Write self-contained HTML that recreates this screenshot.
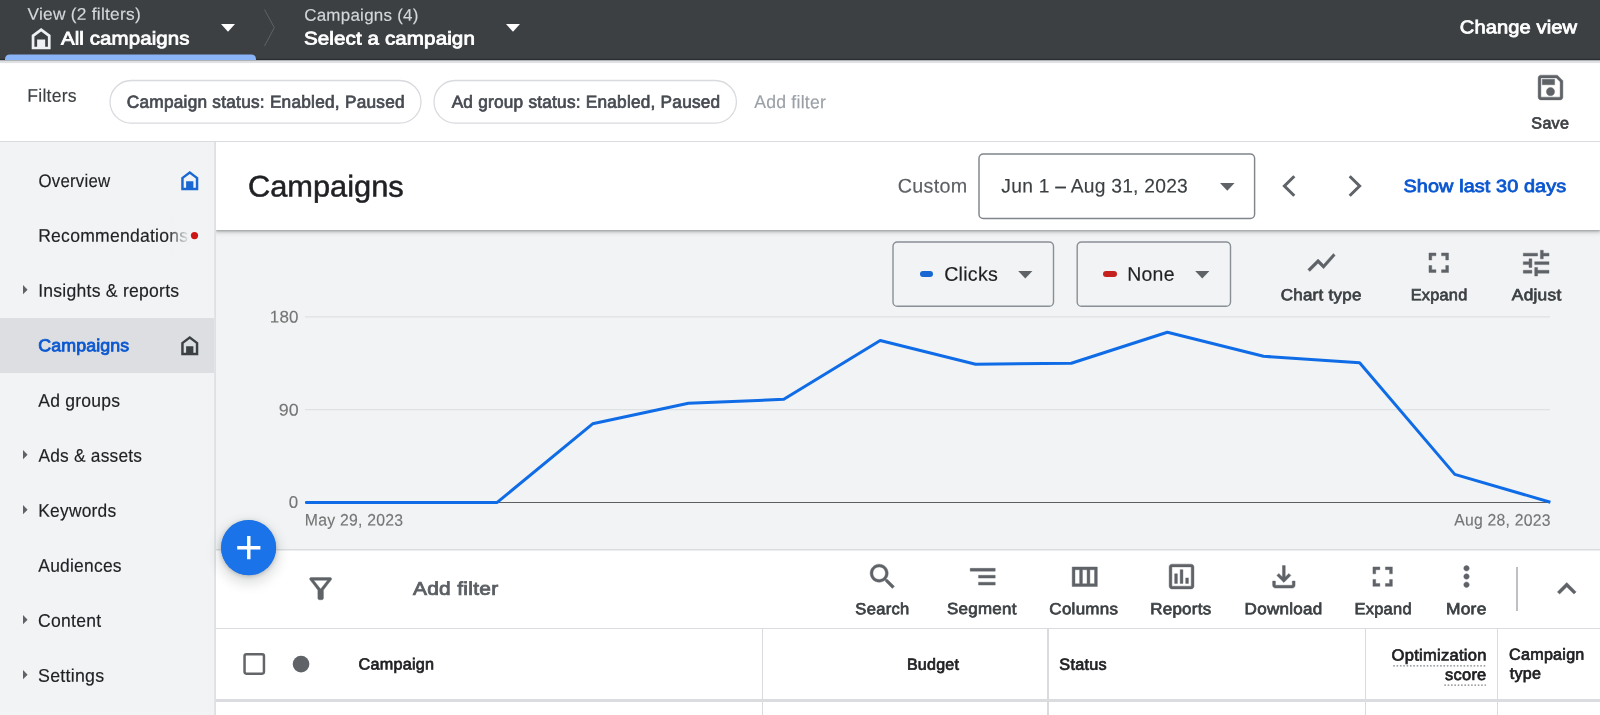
<!DOCTYPE html>
<html lang="en">
<head>
<meta charset="utf-8">
<title>Campaigns</title>
<style>
html,body{margin:0;padding:0;}
body{width:1600px;height:715px;overflow:hidden;position:relative;background:#f1f3f4;font-family:"Liberation Sans",Arial,sans-serif;}
.abs{position:absolute;}
.t{position:absolute;left:0;top:0;white-space:pre;display:block;text-rendering:geometricPrecision;transform-origin:0 0;}
#texts{position:absolute;left:0;top:0;width:1600px;height:715px;will-change:transform;}
svg{position:absolute;display:block;overflow:visible;}
svg.i path{stroke:#5f6368;stroke-width:.3px;stroke-linejoin:miter;}
#topbar{left:0;top:0;width:1600px;height:60px;background:#3c4043;}
#filterbar{left:0;top:60px;width:1600px;height:81px;background:#fff;border-bottom:1px solid #dadce0;}
#sidebar{left:0;top:142px;width:216px;height:573px;background:#f1f3f4;}
#navsel{left:0;top:318.3px;width:214px;height:54.5px;background:#dcdee1;}
#header{left:216px;top:142px;width:1384px;height:88px;background:#fff;box-shadow:0 1.4px 2.5px rgba(60,64,67,.42),0 1.4px 4px 1.4px rgba(60,64,67,.17);}
#toolbar{left:216px;top:550px;width:1384px;height:78px;background:#fff;border-top:1px solid #eceef1;box-sizing:border-box;}
#thead{left:216px;top:628px;width:1384px;height:71px;background:#fff;border-top:1px solid #dadce0;border-bottom:2.5px solid #dadce0;box-sizing:content-box;}
#tbody{left:216px;top:702px;width:1384px;height:13px;background:#fff;}
.vsep{top:629px;width:1.5px;height:86px;background:#d9dbdf;}
</style>
</head>
<body>
<!-- top bar -->
<div id="topbar" class="abs"></div>
<!-- chart area -->
<svg style="left:216px;top:231px" width="1384" height="319" viewBox="216 231 1384 319">
  <line x1="305" x2="1550" y1="316.9" y2="316.9" stroke="#e0e1e3" stroke-width="1.3"/>
  <line x1="305" x2="1550" y1="409.6" y2="409.6" stroke="#e0e1e3" stroke-width="1.3"/>
  <line x1="305" x2="1550" y1="502.5" y2="502.5" stroke="#5c5e60" stroke-width="1.1"/>
  <polyline fill="none" stroke="#0f6ce6" stroke-width="3" stroke-linejoin="round" stroke-linecap="butt"
   points="305.3,502.4 401,502.4 497.2,502.4 592.6,423.8 688.4,403.3 783.8,399.3 880.2,340.5 975.6,364.2 1071.3,363.3 1167.4,332.3 1263.5,356.3 1359.6,362.8 1454.8,474.4 1550.4,502.2"/>
</svg>
<div class="abs" style="left:216px;top:549px;width:1384px;height:1px;background:#dadce0;"></div>
<div id="header" class="abs"></div>
<svg style="left:264px;top:9px" width="11" height="38" viewBox="0 0 11 38"><path d="M0.5 0.5 L10.3 18.6 L0.5 37" fill="none" stroke="#5f6368" stroke-width="1"/></svg>
<svg style="left:221px;top:23.8px" width="14" height="7.7" viewBox="0 0 14 7.7"><path d="M0 0h14L7 7.7z" fill="#fff"/></svg>
<svg style="left:506px;top:23.8px" width="14" height="7.7" viewBox="0 0 14 7.7"><path d="M0 0h14L7 7.7z" fill="#fff"/></svg>
<!-- home icon white -->
<svg style="left:30.6px;top:27.5px" width="20.3" height="21.3" viewBox="4 3 16 18"><path fill="#eef0f2" fill-rule="evenodd" d="M12 3L4 9v12h16V9zM6.3 18.8v-8.65L12 5.9l5.7 4.25v8.65h-2.3v-6.1H8.6v6.1z"/></svg>

<!-- filter bar -->
<div id="filterbar" class="abs"></div>
<div class="abs" style="left:0;top:58px;width:1600px;height:6px;background:linear-gradient(180deg,#3c4043 0,#3c4043 .4px,#2a2e31 .9px,#2a2e31 1.9px,#dcdee2 2.7px,#dddfe3 4.4px,#fff 5.6px);"></div>
<svg style="left:0;top:50px" width="270" height="12" viewBox="0 50 270 12"><path d="M5 60V59.4Q5 54.4 10 54.4H251Q256 54.4 256 59.4V60Z" fill="#8ab4f8"/></svg>
<svg style="left:0;top:60px" width="1600" height="82" viewBox="0 60 1600 82"><rect x="110" y="80.5" width="311" height="42.6" rx="21.3" fill="#fff" stroke="#d8dade" stroke-width="1.3"/><rect x="434" y="80.5" width="302.4" height="42.6" rx="21.3" fill="#fff" stroke="#d8dade" stroke-width="1.3"/></svg>
<svg style="left:1534px;top:71px" width="33" height="33" viewBox="0 0 24 24" class="i"><path fill="#5f6368" d="M17 3H5c-1.11 0-2 .9-2 2v14c0 1.1.89 2 2 2h14c1.1 0 2-.9 2-2V7l-4-4zm2 16H5V5h11.17L19 7.83V19zm-7-7c-1.66 0-3 1.34-3 3s1.34 3 3 3 3-1.34 3-3-1.34-3-3-3zM6 6h9v4H6z"/></svg>

<!-- sidebar -->
<div id="sidebar" class="abs"></div>
<div id="navsel" class="abs"></div>
<svg style="left:212px;top:142px" width="6" height="573" viewBox="212 142 6 573"><rect x="214.2" y="142" width="1.8" height="573" fill="#dee0e4"/></svg>
<svg style="left:180.8px;top:171.2px" width="17.5" height="19.2" viewBox="4 3 16 18"><path fill="#1967d2" fill-rule="evenodd" d="M12 3L4 9v12h16V9zM6.3 18.8v-8.65L12 5.9l5.7 4.25v8.65h-2.3v-6.1H8.6v6.1z"/></svg>
<svg style="left:180.8px;top:336.2px" width="17.5" height="19.2" viewBox="4 3 16 18"><path fill="#3c4043" fill-rule="evenodd" d="M12 3L4 9v12h16V9zM6.3 18.8v-8.65L12 5.9l5.7 4.25v8.65h-2.3v-6.1H8.6v6.1z"/></svg>
<svg style="left:188px;top:229px" width="14" height="14" viewBox="188 229 14 14"><circle cx="194.5" cy="235.6" r="3.6" fill="#cc1616"/></svg>
<svg style="left:23.3px;top:284.8px" width="4.6" height="9.4" viewBox="0 0 5 10"><path d="M0 0l5 5-5 5z" fill="#5f6368"/></svg>
<svg style="left:23.3px;top:449.8px" width="4.6" height="9.4" viewBox="0 0 5 10"><path d="M0 0l5 5-5 5z" fill="#5f6368"/></svg>
<svg style="left:23.3px;top:504.8px" width="4.6" height="9.4" viewBox="0 0 5 10"><path d="M0 0l5 5-5 5z" fill="#5f6368"/></svg>
<svg style="left:23.3px;top:614.8px" width="4.6" height="9.4" viewBox="0 0 5 10"><path d="M0 0l5 5-5 5z" fill="#5f6368"/></svg>
<svg style="left:23.3px;top:669.8px" width="4.6" height="9.4" viewBox="0 0 5 10"><path d="M0 0l5 5-5 5z" fill="#5f6368"/></svg>


<!-- header -->
<svg style="left:970px;top:148px" width="300" height="80" viewBox="970 148 300 80"><rect x="979" y="154.05" width="275.6" height="64.45" rx="4.3" fill="#fff" stroke="#7f858b" stroke-width="1.45"/></svg>
<svg style="left:1219.6px;top:183.3px" width="14.6" height="7.8" viewBox="0 0 14 7.5"><path d="M0 0h14L7 7.5z" fill="#5f6368"/></svg>
<svg style="left:1281.5px;top:175px" width="14" height="22" viewBox="0 0 14 22"><path d="M12.3 1.2L2.4 11l9.9 9.8" fill="none" stroke="#5f6368" stroke-width="3"/></svg>
<svg style="left:1348px;top:175px" width="14" height="22" viewBox="0 0 14 22"><path d="M1.7 1.2L11.6 11l-9.9 9.8" fill="none" stroke="#5f6368" stroke-width="3"/></svg>

<!-- metric boxes -->
<svg style="left:880px;top:236px" width="360" height="76" viewBox="880 236 360 76"><rect x="893" y="242" width="160.5" height="64.2" rx="4.3" fill="none" stroke="#8a8f95" stroke-width="1.4"/><rect x="1077.2" y="242" width="153.3" height="64.2" rx="4.3" fill="none" stroke="#8a8f95" stroke-width="1.4"/></svg>
<div class="abs" style="left:919.5px;top:271.2px;width:13.8px;height:6.1px;border-radius:3px;background:#1967d2;"></div>
<div class="abs" style="left:1103.1px;top:271.4px;width:14px;height:6px;border-radius:3px;background:#c5221f;"></div>
<svg style="left:1018px;top:271.2px" width="14.6" height="7.6" viewBox="0 0 14 7.5"><path d="M0 0h14L7 7.5z" fill="#5f6368"/></svg>
<svg style="left:1194.6px;top:271.2px" width="14.6" height="7.6" viewBox="0 0 14 7.5"><path d="M0 0h14L7 7.5z" fill="#5f6368"/></svg>
<!-- chart type / expand / adjust icons -->
<svg style="left:1304.5px;top:246px" width="33" height="33" viewBox="0 0 24 24" class="i"><path fill="#5f6368" d="M3.5 18.49l6-6.01 4 4L22 6.92l-1.41-1.41-7.09 7.97-4-4L2 16.99z"/></svg>
<svg style="left:1422px;top:246px" width="33.5" height="33.5" viewBox="0 0 24 24" class="i"><path fill="#5f6368" d="M7 14H5v5h5v-2H7v-3zm-2-4h2V7h3V5H5v5zm12 7h-3v2h5v-5h-2v3zM14 5v2h3v3h2V5h-5z"/></svg>
<svg style="left:1518.7px;top:245.7px" width="34.3" height="34.3" viewBox="0 0 24 24" class="i"><path fill="#5f6368" d="M3 17v2h6v-2H3zM3 5v2h10V5H3zm10 16v-2h8v-2h-8v-2h-2v6h2zM7 9v2H3v2h4v2h2V9H7zm14 4v-2H11v2h10zm-6-4h2V7h4V5h-4V3h-2v6z"/></svg>

<!-- toolbar -->
<div id="toolbar" class="abs"></div>
<div id="thead" class="abs"></div>
<div id="tbody" class="abs"></div>
<div class="abs vsep" style="left:761.5px;"></div>
<div class="abs vsep" style="left:1047px;"></div>
<div class="abs vsep" style="left:1364.5px;"></div>
<div class="abs vsep" style="left:1496.5px;"></div>
<div class="abs" style="left:216px;top:698.7px;width:1384px;height:2.6px;background:#dadce0;"></div>
<!-- FAB -->
<div class="abs" style="left:221px;top:520px;width:55px;height:55px;border-radius:50%;background:#1a73e8;box-shadow:0 1.4px 4.1px rgba(60,64,67,.3),0 5.5px 11px 4.1px rgba(60,64,67,.15);"></div>
<svg style="left:216px;top:515px" width="66" height="66" viewBox="216 515 66 66"><circle cx="248.7" cy="547.8" r="27.45" fill="#1a73e8"/><path d="M237.2 547.7h23.2M248.8 536.1v23.2" stroke="#fff" stroke-width="3.4" fill="none"/></svg>
<!-- filter icon -->
<svg style="left:303.75px;top:571.75px" width="33.3" height="33.3" viewBox="0 0 24 24" class="i"><path fill="#5f6368" d="M7 6h10l-5.01 6.3L7 6zm-2.75-.39C6.27 8.2 10 13 10 13v6c0 .55.45 1 1 1h2c.55 0 1-.45 1-1v-6s3.72-4.8 5.74-7.39c.51-.66.04-1.61-.79-1.61H5.04c-.83 0-1.3.95-.79 1.61z"/></svg>
<!-- toolbar icons -->
<svg style="left:865.8px;top:560px" width="33.3" height="33.3" viewBox="0 0 24 24" class="i"><path fill="#5f6368" d="M15.5 14h-.79l-.28-.27C15.41 12.59 16 11.11 16 9.5 16 5.91 13.09 3 9.5 3S3 5.91 3 9.5 5.91 16 9.5 16c1.61 0 3.09-.59 4.23-1.57l.27.28v.79l5 4.99L20.49 19l-4.99-5zm-6 0C7.01 14 5 11.99 5 9.5S7.01 5 9.5 5 14 7.01 14 9.5 11.99 14 9.5 14z"/></svg>
<svg style="left:965.8px;top:559.8px" width="33.4" height="33.4" viewBox="0 0 24 24" class="i"><path fill="#5f6368" d="M9 18h12v-2H9v2zM3 6v2h18V6H3zm6 7h12v-2H9v2z"/></svg>
<svg style="left:1067.5px;top:559.8px" width="33.5" height="33.5" viewBox="0 0 24 24" class="i"><path fill="#5f6368" d="M3 5v14h18V5H3zm5.33 12H5V7h3.33v10zm5.34 0h-3.33V7h3.33v10zM19 17h-3.33V7H19v10z"/></svg>
<svg style="left:1165px;top:559.8px" width="33.1" height="33.1" viewBox="0 0 24 24" class="i"><path fill="#5f6368" d="M9 17H7v-7h2v7zm4 0h-2V7h2v10zm4 0h-2v-4h2v4zm2 2H5V5h14v14zm0-16H5c-1.1 0-2 .9-2 2v14c0 1.1.9 2 2 2h14c1.1 0 2-.9 2-2V5c0-1.1-.9-2-2-2z"/></svg>
<svg style="left:1267px;top:559.6px" width="33.7" height="33.7" viewBox="0 0 24 24" class="i"><path fill="#5f6368" d="M18 15v3H6v-3H4v3c0 1.100.9 2 2 2h12c1.100 0 2-.9 2-2v-3h-2zm-1-4l-1.410-1.410L13 12.170V4h-2v8.170L8.410 9.590 7 11l5 5 5-5z"/></svg>
<svg style="left:1366px;top:560px" width="33.3" height="33.3" viewBox="0 0 24 24" class="i"><path fill="#5f6368" d="M7 14H5v5h5v-2H7v-3zm-2-4h2V7h3V5H5v5zm12 7h-3v2h5v-5h-2v3zM14 5v2h3v3h2V5h-5z"/></svg>
<svg style="left:1449.8px;top:560px" width="33" height="33" viewBox="0 0 24 24" class="i"><path fill="#5f6368" d="M12 8c1.100 0 2-.9 2-2s-.9-2-2-2-2 .9-2 2 .9 2 2 2zm0 2c-1.100 0-2 .9-2 2s.9 2 2 2 2-.9 2-2-.9-2-2-2zm0 6c-1.100 0-2 .9-2 2s.9 2 2 2 2-.9 2-2-.9-2-2-2z"/></svg>
<div class="abs" style="left:1515.9px;top:567px;width:1.9px;height:43.5px;background:#bdbfc2;"></div>
<svg style="left:1548.25px;top:570.4px" width="37.5" height="37.5" viewBox="0 0 24 24" class="i"><path fill="#5f6368" d="M12 8l-6 6 1.410 1.410L12 10.830l4.590 4.580L18 14z"/></svg>
<!-- table header -->
<svg style="left:240px;top:650px" width="74" height="28" viewBox="240 650 74 28"><rect x="244.55" y="654.25" width="19.4" height="19.4" rx="1.8" fill="#fff" stroke="#636568" stroke-width="2.5"/><circle cx="301.05" cy="664.05" r="8.35" fill="#5f6368"/></svg>
<svg style="left:1385px;top:660px" width="110" height="30" viewBox="1385 660 110 30"><path d="M1393.2 665.9H1485.9M1444.3 685.2H1485.9" stroke="#7d8287" stroke-width="1.3" stroke-dasharray="1.6 1.75" fill="none"/></svg>

<div id="texts">
<span class="t" style="transform:translate(27.41px,6.71px) rotate(.03deg) scaleX(1.0274);font-size:16.88px;line-height:16.88px;letter-spacing:0.250px;color:#d4d7db;font-weight:400;-webkit-text-stroke:0.15px currentColor;">View (2 filters)</span>
<span class="t" style="transform:translate(60.89px,29.53px) rotate(.03deg) scaleX(1.1157);font-size:18.34px;line-height:18.34px;letter-spacing:0.100px;color:#ffffff;font-weight:400;-webkit-text-stroke:0.8px currentColor;">All campaigns</span>
<span class="t" style="transform:translate(304.16px,7.66px) rotate(.03deg) scaleX(1.0065);font-size:16.88px;line-height:16.88px;letter-spacing:0.250px;color:#d4d7db;font-weight:400;-webkit-text-stroke:0.15px currentColor;">Campaigns (4)</span>
<span class="t" style="transform:translate(304.01px,29.53px) rotate(.03deg) scaleX(1.1209);font-size:18.34px;line-height:18.34px;letter-spacing:0.100px;color:#ffffff;font-weight:400;-webkit-text-stroke:0.8px currentColor;">Select a campaign</span>
<span class="t" style="transform:translate(1459.82px,18.19px) rotate(.03deg) scaleX(1.0967);font-size:18.34px;line-height:18.34px;letter-spacing:0.100px;color:#ffffff;font-weight:400;-webkit-text-stroke:0.8px currentColor;">Change view</span>
<span class="t" style="transform:translate(27.33px,86.84px) rotate(.03deg) scaleX(0.9608);font-size:18.28px;line-height:18.28px;letter-spacing:0.250px;color:#3c4043;font-weight:400;-webkit-text-stroke:0.15px currentColor;">Filters</span>
<span class="t" style="transform:translate(126.84px,93.65px) rotate(.03deg) scaleX(0.9863);font-size:17.48px;line-height:17.48px;letter-spacing:0.250px;color:#464a51;font-weight:400;-webkit-text-stroke:0.7px currentColor;">Campaign status: Enabled, Paused</span>
<span class="t" style="transform:translate(451.64px,93.64px) rotate(.03deg) scaleX(0.9840);font-size:17.48px;line-height:17.48px;letter-spacing:0.250px;color:#464a51;font-weight:400;-webkit-text-stroke:0.7px currentColor;">Ad group status: Enabled, Paused</span>
<span class="t" style="transform:translate(754.14px,93.11px) rotate(.03deg) scaleX(0.9652);font-size:18.28px;line-height:18.28px;letter-spacing:0.250px;color:#9aa0a6;font-weight:400;-webkit-text-stroke:0.15px currentColor;">Add filter</span>
<span class="t" style="transform:translate(1531.38px,115.38px) rotate(.03deg) scaleX(1.0036);font-size:16.08px;line-height:16.08px;letter-spacing:0.250px;color:#3c4043;font-weight:400;-webkit-text-stroke:0.7px currentColor;">Save</span>
<span class="t" style="transform:translate(38.45px,171.77px) rotate(.03deg) scaleX(0.9203);font-size:18.28px;line-height:18.28px;letter-spacing:0.250px;color:#202124;font-weight:400;-webkit-text-stroke:0.15px currentColor;">Overview</span>
<span class="t" style="transform:translate(38.18px,226.70px) rotate(.03deg) scaleX(0.9621);font-size:18.28px;line-height:18.28px;letter-spacing:0.250px;color:#202124;font-weight:400;-webkit-text-stroke:0.15px currentColor;">Recommendations</span>
<span class="t" style="transform:translate(38.15px,281.68px) rotate(.03deg) scaleX(0.9629);font-size:18.28px;line-height:18.28px;letter-spacing:0.250px;color:#202124;font-weight:400;-webkit-text-stroke:0.15px currentColor;">Insights &amp; reports</span>
<span class="t" style="transform:translate(38.36px,337.32px) rotate(.03deg) scaleX(1.0278);font-size:17.34px;line-height:17.34px;letter-spacing:0.100px;color:#0b57d0;font-weight:400;-webkit-text-stroke:0.8px currentColor;">Campaigns</span>
<span class="t" style="transform:translate(38.32px,391.70px) rotate(.03deg) scaleX(0.9588);font-size:18.28px;line-height:18.28px;letter-spacing:0.250px;color:#202124;font-weight:400;-webkit-text-stroke:0.15px currentColor;">Ad groups</span>
<span class="t" style="transform:translate(38.40px,446.77px) rotate(.03deg) scaleX(0.9471);font-size:18.28px;line-height:18.28px;letter-spacing:0.250px;color:#202124;font-weight:400;-webkit-text-stroke:0.15px currentColor;">Ads &amp; assets</span>
<span class="t" style="transform:translate(38.26px,501.69px) rotate(.03deg) scaleX(0.9507);font-size:18.28px;line-height:18.28px;letter-spacing:0.250px;color:#202124;font-weight:400;-webkit-text-stroke:0.15px currentColor;">Keywords</span>
<span class="t" style="transform:translate(38.31px,556.67px) rotate(.03deg) scaleX(0.9531);font-size:18.28px;line-height:18.28px;letter-spacing:0.250px;color:#202124;font-weight:400;-webkit-text-stroke:0.15px currentColor;">Audiences</span>
<span class="t" style="transform:translate(38.12px,611.68px) rotate(.03deg) scaleX(0.9613);font-size:18.28px;line-height:18.28px;letter-spacing:0.250px;color:#202124;font-weight:400;-webkit-text-stroke:0.15px currentColor;">Content</span>
<span class="t" style="transform:translate(38.13px,666.68px) rotate(.03deg) scaleX(0.9735);font-size:18.28px;line-height:18.28px;letter-spacing:0.250px;color:#202124;font-weight:400;-webkit-text-stroke:0.15px currentColor;">Settings</span>
<span class="t" style="transform:translate(247.90px,172.56px) rotate(.03deg) scaleX(1.0316);font-size:29.87px;line-height:29.87px;letter-spacing:0.000px;color:#202124;font-weight:400;-webkit-text-stroke:0.5px currentColor;">Campaigns</span>
<span class="t" style="transform:translate(897.82px,177.45px) rotate(.03deg) scaleX(1.0034);font-size:19.68px;line-height:19.68px;letter-spacing:0.250px;color:#5c5f63;font-weight:400;-webkit-text-stroke:0.15px currentColor;">Custom</span>
<span class="t" style="transform:translate(1001.34px,177.47px) rotate(.03deg) scaleX(0.9776);font-size:19.68px;line-height:19.68px;letter-spacing:0.250px;color:#3c4043;font-weight:400;-webkit-text-stroke:0.15px currentColor;">Jun 1 – Aug 31, 2023</span>
<span class="t" style="transform:translate(1403.55px,177.98px) rotate(.03deg) scaleX(1.1236);font-size:17.64px;line-height:17.64px;letter-spacing:0.100px;color:#0b57d0;font-weight:400;-webkit-text-stroke:0.8px currentColor;">Show last 30 days</span>
<span class="t" style="transform:translate(944.19px,265.78px) rotate(.03deg) scaleX(0.9976);font-size:19.68px;line-height:19.68px;letter-spacing:0.250px;color:#202124;font-weight:400;-webkit-text-stroke:0.15px currentColor;">Clicks</span>
<span class="t" style="transform:translate(1127.25px,265.78px) rotate(.03deg) scaleX(0.9895);font-size:19.68px;line-height:19.68px;letter-spacing:0.250px;color:#202124;font-weight:400;-webkit-text-stroke:0.15px currentColor;">None</span>
<span class="t" style="transform:translate(1280.71px,287.22px) rotate(.03deg) scaleX(1.0547);font-size:16.08px;line-height:16.08px;letter-spacing:0.250px;color:#3c4043;font-weight:400;-webkit-text-stroke:0.7px currentColor;">Chart type</span>
<span class="t" style="transform:translate(1410.66px,287.16px) rotate(.03deg) scaleX(1.0147);font-size:16.08px;line-height:16.08px;letter-spacing:0.250px;color:#3c4043;font-weight:400;-webkit-text-stroke:0.7px currentColor;">Expand</span>
<span class="t" style="transform:translate(1511.86px,287.29px) rotate(.03deg) scaleX(1.0739);font-size:16.08px;line-height:16.08px;letter-spacing:0.250px;color:#3c4043;font-weight:400;-webkit-text-stroke:0.7px currentColor;">Adjust</span>
<span class="t" style="transform:translate(269.78px,309.44px) rotate(.03deg) scaleX(1.0049);font-size:16.88px;line-height:16.88px;letter-spacing:0.250px;color:#757575;font-weight:400;-webkit-text-stroke:0.15px currentColor;">180</span>
<span class="t" style="transform:translate(278.69px,402.45px) rotate(.03deg) scaleX(1.0578);font-size:16.88px;line-height:16.88px;letter-spacing:0.250px;color:#757575;font-weight:400;-webkit-text-stroke:0.15px currentColor;">90</span>
<span class="t" style="transform:translate(288.83px,494.64px) rotate(.03deg) scaleX(1.0000);font-size:16.88px;line-height:16.88px;letter-spacing:0.000px;color:#757575;font-weight:400;-webkit-text-stroke:0.15px currentColor;">0</span>
<span class="t" style="transform:translate(304.80px,512.58px) rotate(.03deg) scaleX(0.9511);font-size:16.58px;line-height:16.58px;letter-spacing:0.250px;color:#757575;font-weight:400;-webkit-text-stroke:0.15px currentColor;">May 29, 2023</span>
<span class="t" style="transform:translate(1454.18px,512.59px) rotate(.03deg) scaleX(0.9492);font-size:16.58px;line-height:16.58px;letter-spacing:0.250px;color:#757575;font-weight:400;-webkit-text-stroke:0.15px currentColor;">Aug 28, 2023</span>
<span class="t" style="transform:translate(412.91px,579.66px) rotate(.03deg) scaleX(1.1394);font-size:18.34px;line-height:18.34px;letter-spacing:0.286px;color:#5b5f64;font-weight:400;-webkit-text-stroke:0.8px currentColor;">Add filter</span>
<span class="t" style="transform:translate(855.36px,601.14px) rotate(.03deg) scaleX(1.0316);font-size:16.08px;line-height:16.08px;letter-spacing:0.250px;color:#3c4043;font-weight:400;-webkit-text-stroke:0.7px currentColor;">Search</span>
<span class="t" style="transform:translate(947.05px,601.10px) rotate(.03deg) scaleX(1.0540);font-size:16.08px;line-height:16.08px;letter-spacing:0.250px;color:#3c4043;font-weight:400;-webkit-text-stroke:0.7px currentColor;">Segment</span>
<span class="t" style="transform:translate(1049.35px,601.14px) rotate(.03deg) scaleX(1.0570);font-size:16.08px;line-height:16.08px;letter-spacing:0.250px;color:#3c4043;font-weight:400;-webkit-text-stroke:0.7px currentColor;">Columns</span>
<span class="t" style="transform:translate(1150.19px,601.19px) rotate(.03deg) scaleX(1.0547);font-size:16.08px;line-height:16.08px;letter-spacing:0.250px;color:#3c4043;font-weight:400;-webkit-text-stroke:0.7px currentColor;">Reports</span>
<span class="t" style="transform:translate(1244.63px,601.13px) rotate(.03deg) scaleX(1.0591);font-size:16.08px;line-height:16.08px;letter-spacing:0.250px;color:#3c4043;font-weight:400;-webkit-text-stroke:0.7px currentColor;">Download</span>
<span class="t" style="transform:translate(1354.47px,601.14px) rotate(.03deg) scaleX(1.0230);font-size:16.08px;line-height:16.08px;letter-spacing:0.250px;color:#3c4043;font-weight:400;-webkit-text-stroke:0.7px currentColor;">Expand</span>
<span class="t" style="transform:translate(1445.92px,601.21px) rotate(.03deg) scaleX(1.0817);font-size:16.08px;line-height:16.08px;letter-spacing:0.250px;color:#3c4043;font-weight:400;-webkit-text-stroke:0.7px currentColor;">More</span>
<span class="t" style="transform:translate(358.52px,656.43px) rotate(.03deg) scaleX(1.0069);font-size:16.08px;line-height:16.08px;letter-spacing:0.250px;color:#202124;font-weight:400;-webkit-text-stroke:0.7px currentColor;">Campaign</span>
<span class="t" style="transform:translate(906.92px,656.72px) rotate(.03deg) scaleX(0.9967);font-size:16.08px;line-height:16.08px;letter-spacing:0.250px;color:#202124;font-weight:400;-webkit-text-stroke:0.7px currentColor;">Budget</span>
<span class="t" style="transform:translate(1059.30px,656.71px) rotate(.03deg) scaleX(1.0107);font-size:16.08px;line-height:16.08px;letter-spacing:0.250px;color:#202124;font-weight:400;-webkit-text-stroke:0.7px currentColor;">Status</span>
<span class="t" style="transform:translate(1391.63px,647.57px) rotate(.03deg) scaleX(1.0295);font-size:16.08px;line-height:16.08px;letter-spacing:0.250px;color:#202124;font-weight:400;-webkit-text-stroke:0.7px currentColor;">Optimization</span>
<span class="t" style="transform:translate(1444.99px,666.90px) rotate(.03deg) scaleX(1.0244);font-size:16.08px;line-height:16.08px;letter-spacing:0.250px;color:#202124;font-weight:400;-webkit-text-stroke:0.7px currentColor;">score</span>
<span class="t" style="transform:translate(1509.12px,646.63px) rotate(.03deg) scaleX(1.0020);font-size:16.08px;line-height:16.08px;letter-spacing:0.250px;color:#202124;font-weight:400;-webkit-text-stroke:0.7px currentColor;">Campaign</span>
<span class="t" style="transform:translate(1509.81px,665.72px) rotate(.03deg) scaleX(1.0000);font-size:16.08px;line-height:16.08px;letter-spacing:0.250px;color:#202124;font-weight:400;-webkit-text-stroke:0.7px currentColor;">type</span>
</div>
<div class="abs" style="left:168px;top:215px;width:20px;height:40px;background:linear-gradient(90deg,rgba(241,243,244,0),rgba(241,243,244,.55) 55%,rgba(241,243,244,.93));"></div>
</body>
</html>
